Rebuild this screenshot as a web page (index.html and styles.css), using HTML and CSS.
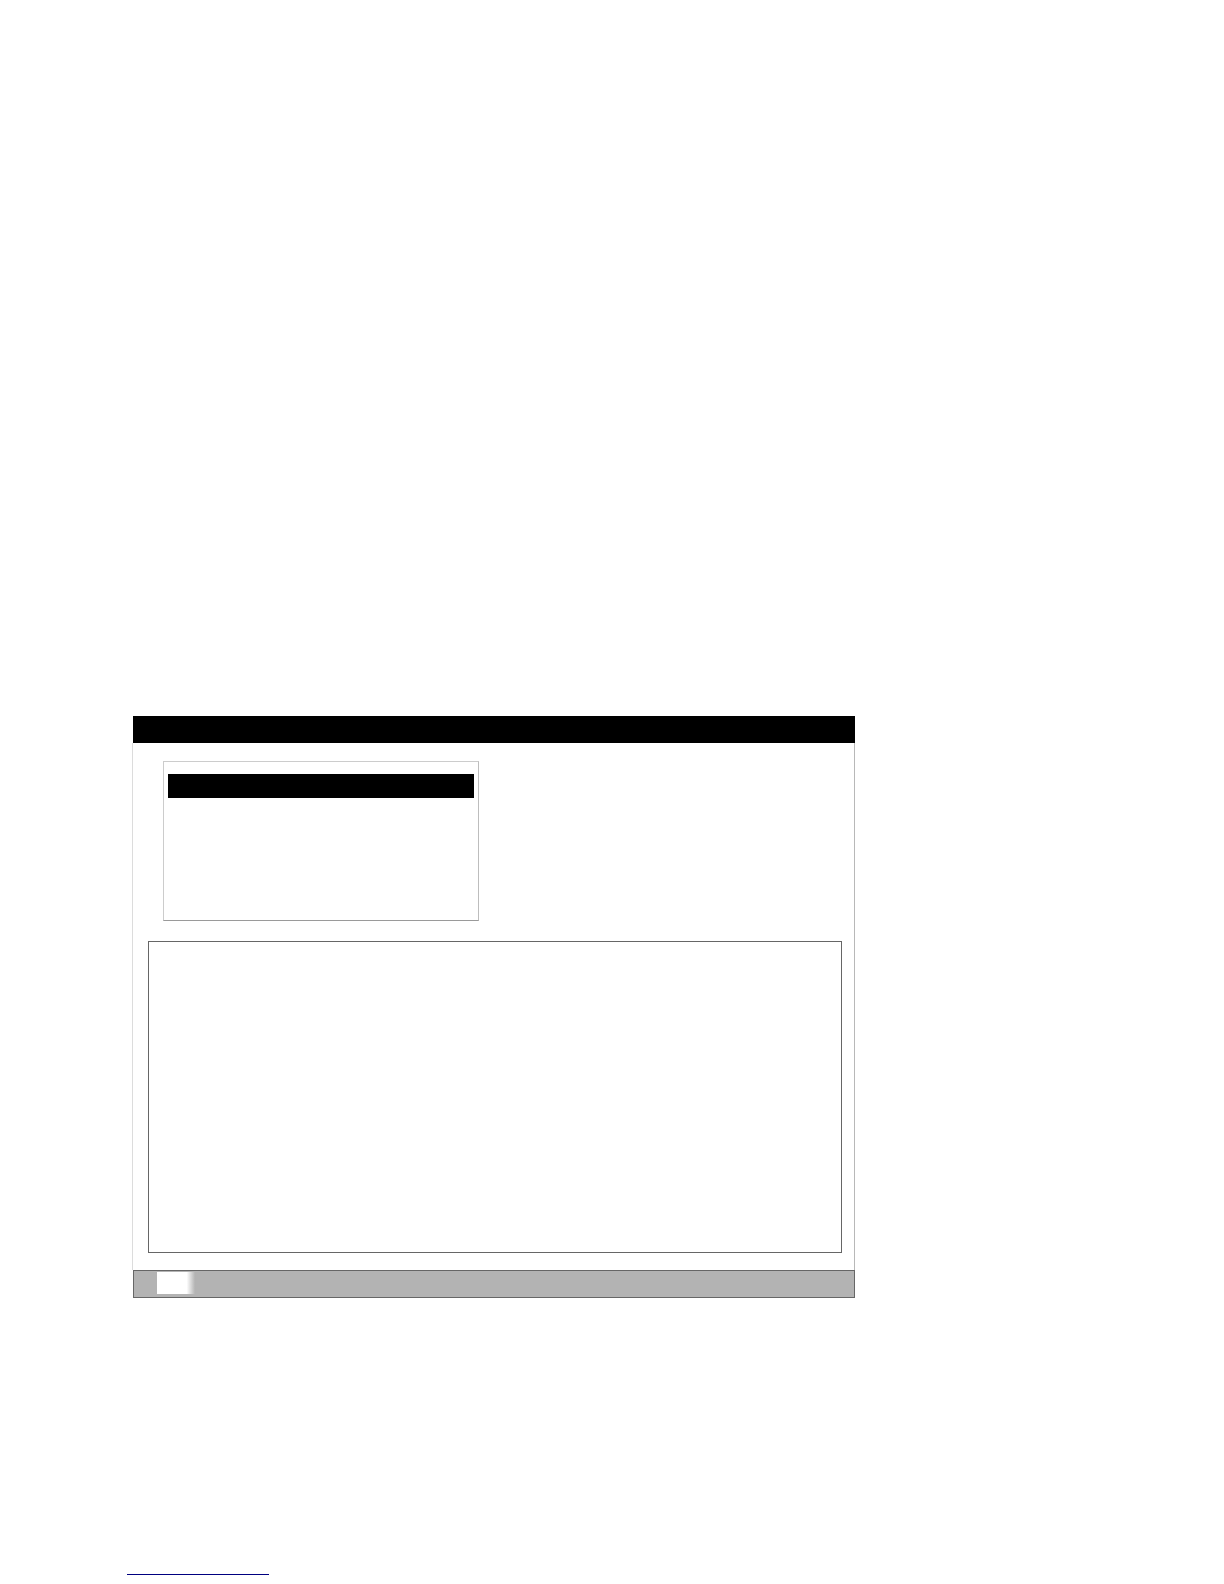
FILE: index.html
```html
<!DOCTYPE html>
<html lang="en">
<head>
<meta charset="utf-8">
<title>Window</title>
<link rel="stylesheet" href="styles.css">
</head>
<body>
<div class="page">
  <div class="window">
    <div class="titlebar"></div>
    <div class="content">
      <div class="listbox">
        <div class="item selected"></div>
      </div>
      <div class="panel"></div>
    </div>
    <div class="statusbar">
      <div class="status-field"></div>
    </div>
  </div>
  <a class="link" href="#"></a>
</div>
</body>
</html>
```
FILE: styles.css
```css
html, body {
  margin: 0;
  padding: 0;
  background: #ffffff;
  font-family: "Liberation Sans", Arial, sans-serif;
}

.page {
  padding: 716px 0 0 0;
  height: 1584px;
  box-sizing: border-box;
  overflow: hidden;
}

.window {
  margin-left: 132px;
  width: 723px;
}

.titlebar {
  margin-left: 1px;
  height: 27px;
  background: #000000;
}

.content {
  border-left: 1px solid #dcdcdc;
  border-right: 1px solid #b8b8b8;
  padding: 18px 0 17px 0;
}

.listbox {
  margin-left: 30px;
  width: 316px;
  height: 160px;
  box-sizing: border-box;
  border: 1px solid #cccccc;
  border-bottom-color: #9a9a9a;
  border-right-color: #bdbdbd;
  padding: 12px 4px 0 4px;
}

.item {
  height: 24px;
}

.item.selected {
  background: #000000;
}

.panel {
  margin-top: 20px;
  margin-left: 15px;
  width: 694px;
  height: 312px;
  box-sizing: border-box;
  border: 1px solid #666666;
}

.statusbar {
  margin-left: 1px;
  height: 28px;
  box-sizing: border-box;
  border: 1px solid #666666;
  background: #b3b3b3;
  padding: 1px 0 0 23px;
}

.status-field {
  width: 38px;
  height: 22px;
  background: linear-gradient(to right, #ffffff 0%, #ffffff 78%, #b3b3b3 100%);
}

.link {
  display: block;
  margin-top: 276px;
  margin-left: 127px;
  width: 142px;
  height: 1px;
  background: #000080;
}
```
